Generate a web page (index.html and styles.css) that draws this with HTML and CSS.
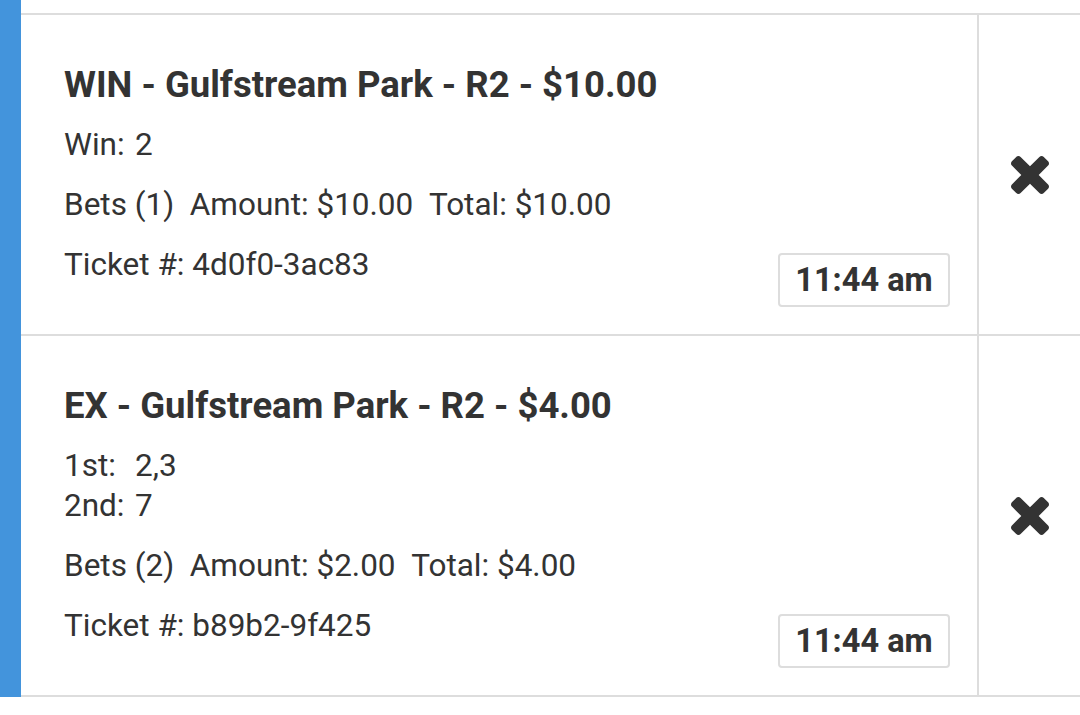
FILE: index.html
```html
<!DOCTYPE html>
<html>
<head>
<meta charset="utf-8">
<link rel="stylesheet" href="styles.css">
</head>
<body>
<div class="list">
  <div class="prev"></div>
  <div class="card">
    <div class="content">
      <div class="info">
        <div class="title">WIN - Gulfstream Park - R2 - $10.00</div>
        <div class="group">
          <div class="line"><span class="label">Win:</span>2</div>
        </div>
        <div class="group">
          <div class="line">Bets (1)&nbsp;&nbsp;Amount: $10.00&nbsp;&nbsp;Total: $10.00</div>
        </div>
        <div class="group">
          <div class="line">Ticket #: 4d0f0-3ac83</div>
        </div>
      </div>
      <div class="time">11:44 am</div>
    </div>
    <div class="action">
      <svg class="close" viewBox="110 366 1188 1188"><path d="M1298 1322q0 40-28 68l-136 136q-28 28-68 28t-68-28l-294-294-294 294q-28 28-68 28t-68-28l-136-136q-28-28-28-68t28-68l294-294-294-294q-28-28-28-68t28-68l136-136q28-28 68-28t68 28l294 294 294-294q28-28 68-28t68 28l136 136q28 28 28 68t-28 68l-294 294 294 294q28 28 28 68z"/></svg>
    </div>
  </div>
  <div class="card last">
    <div class="content">
      <div class="info">
        <div class="title">EX - Gulfstream Park - R2 - $4.00</div>
        <div class="group">
          <div class="line"><span class="label">1st:</span>2,3</div>
          <div class="line"><span class="label">2nd:</span>7</div>
        </div>
        <div class="group">
          <div class="line">Bets (2)&nbsp;&nbsp;Amount: $2.00&nbsp;&nbsp;Total: $4.00</div>
        </div>
        <div class="group">
          <div class="line">Ticket #: b89b2-9f425</div>
        </div>
      </div>
      <div class="time">11:44 am</div>
    </div>
    <div class="action">
      <svg class="close" viewBox="110 366 1188 1188"><path d="M1298 1322q0 40-28 68l-136 136q-28 28-68 28t-68-28l-294-294-294 294q-28 28-68 28t-68-28l-136-136q-28-28-28-68t28-68l294-294-294-294q-28-28-28-68t28-68l136-136q28-28 68-28t68 28l294 294 294-294q28-28 68-28t68 28l136 136q28 28 28 68t-28 68l-294 294 294 294q28 28 28 68z"/></svg>
    </div>
  </div>
</div>
</body>
</html>
```

FILE: styles.css
```css
html, body {
  margin: 0;
  padding: 0;
  background: #fff;
}
body {
  font-family: Roboto, "Liberation Sans", sans-serif;
  color: #333;
  width: 1080px;
  height: 715px;
  overflow: hidden;
}
.list {
  border-left: 21px solid #4394dc;
  display: flex;
  flex-direction: column;
}
.prev {
  height: 13px;
}
.card {
  display: flex;
  border-top: 2px solid #ddd;
}
.card.last {
  border-bottom: 2px solid #ddd;
}
.content {
  flex: 1;
  display: flex;
  justify-content: space-between;
  align-items: flex-end;
  padding: 0 27px 0 43px;
  border-right: 2px solid #ddd;
}
.info {
  padding: 49px 0 49px;
  display: flex;
  flex-direction: column;
  gap: 20px;
}
.title {
  font-weight: 700;
  font-size: 36.5px;
  line-height: 41px;
}
.line {
  font-size: 31.5px;
  line-height: 40px;
  white-space: nowrap;
}
.label {
  display: inline-block;
  width: 71px;
}
.time {
  margin-bottom: 27px;
  border: 2px solid #ddd;
  border-radius: 4px;
  height: 54px;
  width: 172px;
  box-sizing: border-box;
  display: flex;
  align-items: center;
  justify-content: center;
  font-weight: 700;
  font-size: 32.5px;
}
.action {
  width: 101px;
  display: flex;
  align-items: center;
  justify-content: center;
}
.close {
  width: 38px;
  height: 38px;
  fill: #333;
}
```
